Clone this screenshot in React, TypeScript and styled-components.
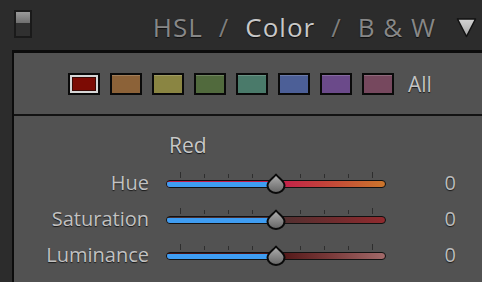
import React from 'react';
import styled, { createGlobalStyle } from 'styled-components';

const GlobalStyle = createGlobalStyle`
	html, body {
		margin: 0;
		padding: 0;
		background: #2b2b2b;
	}
	body {
		font-family: "Open Sans", "DejaVu Sans", sans-serif;
	}
`;

const Frame = styled.div`
	width: 482px;
	height: 282px;
	overflow: hidden;
	background: #2c2c2c;
	padding-left: 12px;
	box-sizing: border-box;
	display: flex;
	flex-direction: column;
`;

const Header = styled.div`
	height: 50px;
	flex-shrink: 0;
	display: flex;
	align-items: center;
	padding: 0 5px 0 2px;
	box-sizing: border-box;
`;

const Toggle = styled.div`
	width: 14px;
	height: 24px;
	border: 2px solid #1a1a1a;
	background: #303030;
	margin-bottom: 2px;
`;

const ToggleTop = styled.div`
	height: 11px;
	background: linear-gradient(#9a9a9a, #6f6f6f);
`;

const Title = styled.div`
	margin-left: auto;
	display: flex;
	align-items: center;
	padding-top: 3px;
	font-size: 26px;
	letter-spacing: 1px;
	line-height: 1;
	color: #878787;
	text-shadow: 0 1px 1px rgba(0, 0, 0, 0.7);
`;

const Tab = styled.span<{ $active?: boolean }>`
	color: ${(p) => (p.$active ? '#c8c8c8' : '#878787')};
`;

const Slash = styled.span`
	margin: 0 16px;
	color: #7e7e7e;
`;

const Caret = styled.svg`
	margin-left: 20px;
	margin-top: 5px;
`;

const Panel = styled.div`
	flex: 1;
	background: #525252;
	border-top: 3px solid #0c0c0c;
	border-left: 2px solid #0c0c0c;
`;

const SwatchRow = styled.div`
	height: 61px;
	display: flex;
	align-items: center;
	gap: 10px;
	padding-left: 54px;
	border-bottom: 2px solid #121212;
`;

const Swatch = styled.div<{ $color: string; $selected?: boolean }>`
	width: 28px;
	height: 18px;
	border: 2px solid #0a0a0a;
	background: ${(p) => p.$color};
	box-shadow: ${(p) =>
		p.$selected
			? 'inset 0 0 0 2px #d6d6d6, inset 0 0 0 3px #3a0a06'
			: 'inset 0 1px 0 rgba(255,255,255,0.18)'};
`;

const AllLabel = styled.span`
	margin-left: 4px;
	font-size: 21px;
	color: #c4c4c4;
	text-shadow: 0 1px 1px rgba(0, 0, 0, 0.7);
`;

const Section = styled.div`
	padding-top: 17px;
`;

const GroupName = styled.div`
	padding-left: 155px;
	height: 24px;
	line-height: 24px;
	margin-bottom: 8px;
	font-size: 21px;
	color: #c8c8c8;
	text-shadow: 0 1px 1px rgba(0, 0, 0, 0.7);
`;

const Row = styled.div`
	height: 36px;
	display: grid;
	grid-template-columns: 135px 220px 53px;
	column-gap: 17px;
	align-items: center;
`;

const Label = styled.span`
	text-align: right;
	font-size: 20px;
	line-height: 24px;
	color: #c2c2c2;
	text-shadow: 0 1px 1px rgba(0, 0, 0, 0.7);
`;

const Value = styled.span`
	text-align: right;
	font-size: 20px;
	line-height: 24px;
	color: #bcbcbc;
	text-shadow: 0 1px 1px rgba(0, 0, 0, 0.7);
`;

const SliderBox = styled.div`
	position: relative;
	height: 24px;
`;

const Ticks = styled.div`
	height: 7px;
	display: flex;
	justify-content: space-between;
	align-items: flex-end;
	padding: 0 13px 0 14px;
`;

const Tick = styled.span<{ $tall?: boolean }>`
	width: 1px;
	height: ${(p) => (p.$tall ? 6 : 4)}px;
	background: #2e2e2e;
`;

const Track = styled.div<{ $gradient: string }>`
	position: relative;
	margin-top: 2px;
	height: 6px;
	border: 1px solid #111;
	border-radius: 4px;
	background: ${(p) => p.$gradient};
	overflow: hidden;
`;

const Fill = styled.div`
	position: absolute;
	left: 0;
	top: 1px;
	bottom: 0;
	background: #3f9df2;
`;

const Thumb = styled.svg`
	position: absolute;
	top: 2px;
	margin-left: -11px;
`;

const swatches = ['#7c0b04', '#8c6238', '#8a8542', '#516a3d', '#4a7a6a', '#4c5f97', '#6b4a8a', '#76485e'];

const sliders = [
	{ label: 'Hue', value: 0, gradient: 'linear-gradient(90deg, #c41c4c 0%, #c41c4c 50%, #c2423a 72%, #cc762c 100%)' },
	{ label: 'Saturation', value: 0, gradient: 'linear-gradient(90deg, #4a3030 0%, #4e3030 50%, #6e2c2e 75%, #902a2e 100%)' },
	{ label: 'Luminance', value: 0, gradient: 'linear-gradient(90deg, #4a1212 0%, #4e1414 50%, #7a3a3a 75%, #a26a6a 100%)' },
];

function Slider({ value, gradient }: { value: number; gradient: string }) {
	const pct = ((value + 100) / 200) * 100;
	return (
		<SliderBox>
			<Ticks>
				{Array.from({ length: 9 }).map((_, i) => (
					<Tick key={i} $tall={i === 0 || i === 8} />
				))}
			</Ticks>
			<Track $gradient={gradient}>
				<Fill style={{ width: `${pct}%` }} />
			</Track>
			<Thumb width="22" height="21" viewBox="0 0 22 21" style={{ left: `${pct}%` }}>
				<defs>
					<linearGradient id="thumbFill" x1="0" y1="0" x2="0" y2="1">
						<stop offset="0" stopColor="#b0b0b0" />
						<stop offset="1" stopColor="#646464" />
					</linearGradient>
				</defs>
				<path
					d="M11 1.5 C13.5 5 19.5 8 19.5 12.5 A8.5 7.5 0 0 1 2.5 12.5 C2.5 8 8.5 5 11 1.5 Z"
					fill="url(#thumbFill)"
					stroke="#0a0a0a"
					strokeWidth="2"
					strokeLinejoin="round"
				/>
			</Thumb>
		</SliderBox>
	);
}

export default function App() {
	return (
		<>
			<GlobalStyle />
			<Frame>
				<Header>
					<Toggle>
						<ToggleTop />
					</Toggle>
					<Title>
						<Tab>HSL</Tab>
						<Slash>/</Slash>
						<Tab $active>Color</Tab>
						<Slash>/</Slash>
						<Tab>B &amp; W</Tab>
					</Title>
					<Caret width="21" height="21" viewBox="0 0 21 21">
						<defs>
							<linearGradient id="caretFill" x1="0" y1="0" x2="0" y2="1">
								<stop offset="0" stopColor="#d4d4d4" />
								<stop offset="1" stopColor="#a6a6a6" />
							</linearGradient>
						</defs>
						<path d="M1.5 2 L19.5 2 L10.5 19.5 Z" fill="url(#caretFill)" stroke="#111" strokeWidth="1.5" strokeLinejoin="round" />
					</Caret>
				</Header>
				<Panel>
					<SwatchRow>
						{swatches.map((c, i) => (
							<Swatch key={c} $color={c} $selected={i === 0} />
						))}
						<AllLabel>All</AllLabel>
					</SwatchRow>
					<Section>
						<GroupName>Red</GroupName>
						{sliders.map((s) => (
							<Row key={s.label}>
								<Label>{s.label}</Label>
								<Slider value={s.value} gradient={s.gradient} />
								<Value>{s.value}</Value>
							</Row>
						))}
					</Section>
				</Panel>
			</Frame>
		</>
	);
}
